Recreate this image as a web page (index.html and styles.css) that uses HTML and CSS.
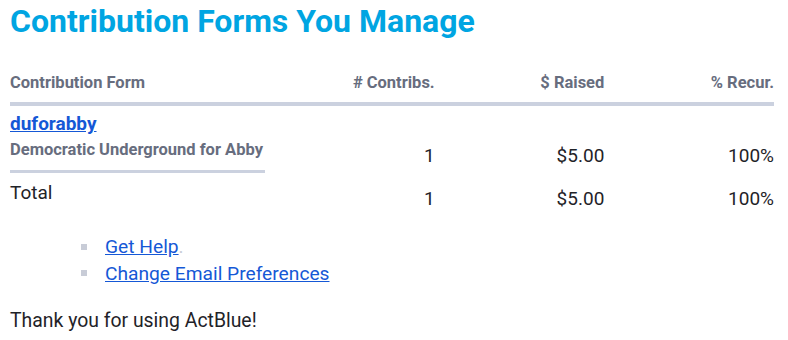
FILE: index.html
```html
<!DOCTYPE html>
<html>
<head>
<meta charset="utf-8">
<link rel="stylesheet" href="styles.css">
</head>
<body>
<h1 class="title">Contribution Forms You Manage</h1>
<div class="table">
  <div class="row head">
    <div class="cell">Contribution Form</div>
    <div class="cell num"># Contribs.</div>
    <div class="cell num">$ Raised</div>
    <div class="cell num">% Recur.</div>
  </div>
  <div class="row item">
    <div class="cell form">
      <a class="form-link" href="#">duforabby</a>
      <div class="form-name">Democratic Underground for Abby</div>
    </div>
    <div class="cell num">1</div>
    <div class="cell num">$5.00</div>
    <div class="cell num">100%</div>
  </div>
  <div class="row total">
    <div class="cell">Total</div>
    <div class="cell num">1</div>
    <div class="cell num">$5.00</div>
    <div class="cell num">100%</div>
  </div>
</div>
<ul class="links">
  <li><a href="#">Get Help</a><span class="dot">.</span></li>
  <li><a href="#">Change Email Preferences</a></li>
</ul>
<p class="thanks">Thank you for using ActBlue!</p>
</body>
</html>
```
FILE: styles.css
```css
body {
  margin: 0;
  padding: 0 14px 0 10px;
  font-family: Roboto, "Liberation Sans", sans-serif;
  color: #1f2328;
  background: #fff;
}
.title {
  margin: 2px 0 0;
  font-size: 32px;
  font-weight: 700;
  color: #00a5e2;
  line-height: 38px;
}
.table {
  margin-top: 33.4px;
}
.row {
  display: grid;
  grid-template-columns: 255px 1fr 1fr 1fr;
}
.head {
  font-size: 16.5px;
  line-height: 20px;
  font-weight: 700;
  color: #676d7e;
  border-bottom: 4px solid #cbd1df;
  padding-bottom: 8.6px;
}
.num {
  text-align: right;
}
.item {
  font-size: 19px;
  line-height: 22px;
}
.item .num {
  align-self: end;
  padding-bottom: 5.5px;
}
.form {
  border-bottom: 3px solid #cbd1df;
  padding-top: 7.5px;
  padding-bottom: 9.6px;
}
.form-link {
  font-size: 19px;
  line-height: 22px;
  font-weight: 700;
  color: #1558d6;
  display: block;
}
.form-name {
  font-size: 16.5px;
  line-height: 20px;
  font-weight: 700;
  color: #676d7e;
  margin-top: 4.9px;
}
.total {
  font-size: 19px;
  line-height: 22px;
}
.total .cell {
  padding-top: 9.5px;
}
.total .num {
  padding-top: 15.2px;
}
.links {
  list-style: none;
  margin: 24px 0 0;
  padding-left: 71px;
  font-size: 19.2px;
  line-height: 26.7px;
}
.links li {
  display: flex;
}
.links li::before {
  content: "";
  flex: none;
  width: 6px;
  height: 6px;
  margin-top: 9.5px;
  margin-right: 18px;
  background: #c8ccd7;
}
.links a {
  color: #1558d6;
}
.dot {
  color: #c8ccd7;
}
.thanks {
  margin: 21px 0 0;
  font-size: 19.4px;
}
```
